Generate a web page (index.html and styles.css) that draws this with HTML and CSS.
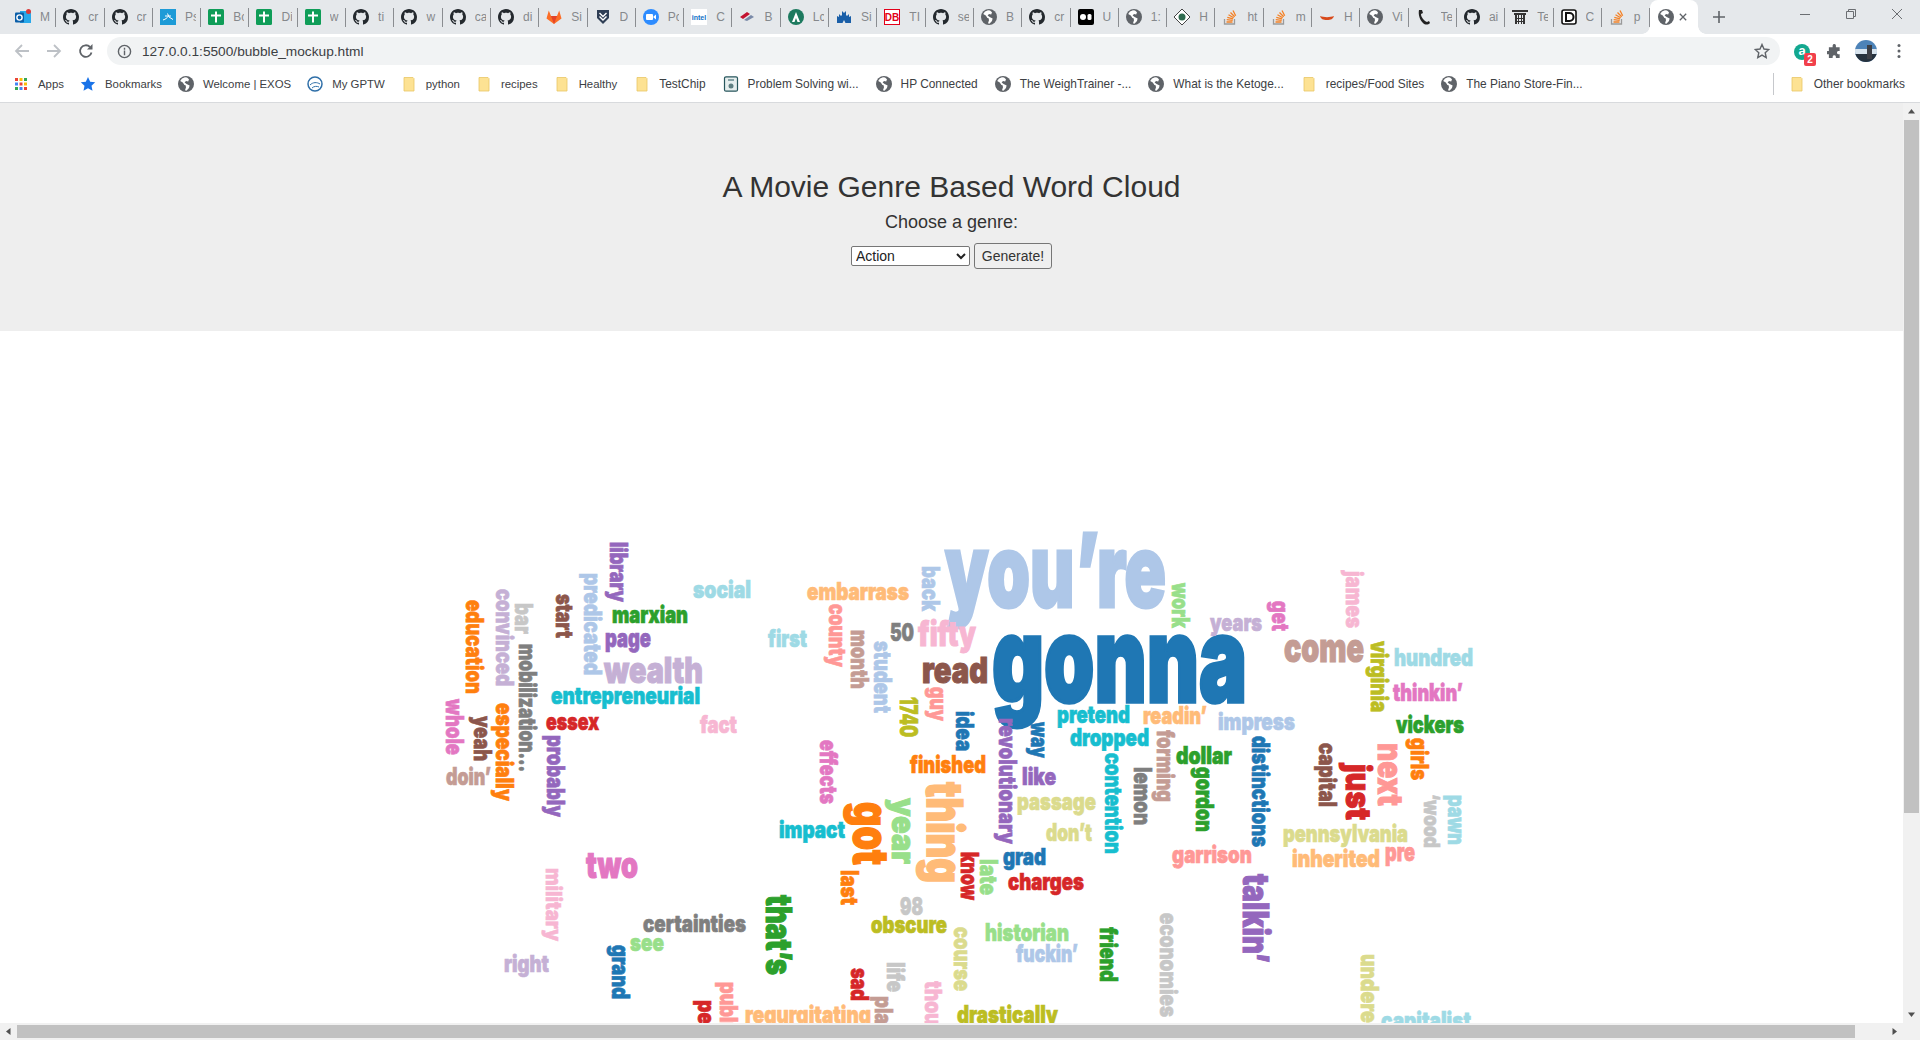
FILE: index.html
```html
<!DOCTYPE html>
<html lang="en">
<head>
<meta charset="utf-8">
<title>bubble_mockup</title>
<link rel="stylesheet" href="styles.css">
</head>
<body>
<svg class="defs" width="0" height="0" aria-hidden="true">
  <symbol id="gh" viewBox="0 0 16 16"><path fill="#24292e" d="M8 0C3.58 0 0 3.58 0 8c0 3.54 2.29 6.53 5.47 7.59.4.07.55-.17.55-.38 0-.19-.01-.82-.01-1.49-2.01.37-2.53-.49-2.69-.94-.09-.23-.48-.94-.82-1.13-.28-.15-.68-.52-.01-.53.63-.01 1.08.58 1.23.82.72 1.21 1.87.87 2.33.66.07-.52.28-.87.51-1.07-1.78-.2-3.64-.89-3.64-3.95 0-.87.31-1.59.82-2.15-.08-.2-.36-1.02.08-2.12 0 0 .67-.21 2.2.82.64-.18 1.32-.27 2-.27.68 0 1.36.09 2 .27 1.53-1.04 2.2-.82 2.2-.82.44 1.1.16 1.92.08 2.12.51.56.82 1.27.82 2.15 0 3.07-1.87 3.75-3.65 3.95.29.25.54.73.54 1.48 0 1.07-.01 1.93-.01 2.2 0 .21.15.46.55.38A8.013 8.013 0 0016 8c0-4.42-3.58-8-8-8z"/></symbol>
  <symbol id="globe" viewBox="0 0 16 16"><circle cx="8" cy="8" r="8" fill="#5f6368"/><path fill="#fff" d="M7 1.2 4 2.4 2.2 5l2.6 1.5L6.4 9l1.2.2.4 2-1 3 1.4.6L11 12l.6-2.6L8.6 8 6.6 6.6 8 5l2.2.4L11 3.2 9 1.4z"/></symbol>
  <symbol id="outlook" viewBox="0 0 16 16"><rect x="5" y="2" width="11" height="12" fill="#28a8ea"/><rect x="0" y="3.5" width="9" height="10" rx="1" fill="#0a5ea8"/><circle cx="4.5" cy="8.5" r="2.6" fill="none" stroke="#fff" stroke-width="1.4"/><circle cx="13.5" cy="2.5" r="2.5" fill="#d83b3b"/></symbol>
  <symbol id="xblue" viewBox="0 0 16 16"><rect width="16" height="16" fill="#1d9bd7"/><path d="M3 11c3-1 4-2 5-3.500M7.500 4.500 9 8l4 2.500M5 7h6" fill="none" stroke="#fff" stroke-width="1"/></symbol>
  <symbol id="cross" viewBox="0 0 16 16"><rect width="16" height="16" rx="1.500" fill="#0f9d58"/><path d="M7 2.500h2v3h4v2H9v6H7v-6H3v-2h4z" fill="#fff"/></symbol>
  <symbol id="gitlab" viewBox="0 0 16 16"><path d="M8 15 .5 9.500 2.800 1.500 5 7h6l2.200-5.500 2.300 8z" fill="#fc6d26"/><path d="M8 15 5 7h6z" fill="#e24329"/></symbol>
  <symbol id="shield" viewBox="0 0 16 16"><path d="M2 1h12v8l-6 6-6-6z" fill="#2f3e55"/><path d="M4.500 4 8 7.500 11.500 4M4.500 7.500 8 11l3.500-3.500" fill="none" stroke="#fff" stroke-width="1.400"/></symbol>
  <symbol id="zoomi" viewBox="0 0 16 16"><circle cx="8" cy="8" r="8" fill="#2d8cff"/><rect x="3" y="5" width="7" height="6" rx="1" fill="#fff"/><path d="M10.500 7.500 13 5.500v5l-2.500-2z" fill="#fff"/></symbol>
  <symbol id="intel" viewBox="0 0 16 16"><rect width="16" height="16" fill="#fff"/><text x="8" y="10.500" class="icon-txt" font-size="7" text-anchor="middle" fill="#0f6fc6">intel</text></symbol>
  <symbol id="bofa" viewBox="0 0 16 16"><path d="M1 8 8 3l3 2-7 5z" fill="#c41230"/><path d="M5 11l7-5 3 2-7 4z" fill="#7a8aa8"/></symbol>
  <symbol id="lc" viewBox="0 0 16 16"><circle cx="8" cy="8" r="8" fill="#1d7a5f"/><path d="M8 3 12 13H9.500L8 9 6.500 13H4z" fill="#fff"/></symbol>
  <symbol id="hp" viewBox="0 0 16 16"><path d="M1 14V7l2 1V5l2 2 1-1V2l2 2 2-2v4l1 1 2-2v3l2-1v7H9.500l-1.500-3-1.500 3z" fill="#1a5fa8"/></symbol>
  <symbol id="db" viewBox="0 0 16 16"><rect x=".5" y=".5" width="15" height="15" fill="#fff" stroke="#e2001a"/><text x="8" y="12" class="icon-txt" font-size="10" text-anchor="middle" fill="#e2001a">DB</text></symbol>
  <symbol id="black" viewBox="0 0 16 16"><rect width="16" height="16" rx="2" fill="#000"/><circle cx="5" cy="8" r="3" fill="#fff"/><rect x="9.500" y="5" width="4" height="6" rx="1.500" fill="#fff"/></symbol>
  <symbol id="diamond" viewBox="0 0 16 16"><path d="M8 0 16 8 8 16 0 8z" fill="#fff" stroke="#444"/><circle cx="8" cy="8" r="3.500" fill="#2f6b4f"/></symbol>
  <symbol id="so" viewBox="0 0 16 16"><path d="M2.500 10v5h10v-5" fill="none" stroke="#9a9a9a" stroke-width="1.300"/><path d="M4.500 13h6M4.700 10.700l6 .6M5.300 8.300l5.800 1.600M6.500 5.800l5.200 3M8.500 3.500l4.200 4.300M11 1.500l2.700 5.300" fill="none" stroke="#f48024" stroke-width="1.300"/></symbol>
  <symbol id="redb" viewBox="0 0 16 16"><path d="M1 7c4 1.500 10 1.500 14 0-1 3-3 4-7 4S2 10 1 7z" fill="#d84a1b"/></symbol>
  <symbol id="phone" viewBox="0 0 16 16"><path d="M3 1h3l1 3-2 1c0 3 3 7 6 8l2-1 1 2c-2 2-5 2-7 0C4 11 2 6 3 1z" fill="#222"/></symbol>
  <symbol id="torii" viewBox="0 0 16 16"><path d="M0 1h16v2H0zM2 4h12v2H2zM3 6h2v9H3zM11 6h2v9h-2zM6 6h1v9H6zM9 6h1v9H9zM3 9h10v1H3zM3 12h10v1H3z" fill="#333"/></symbol>
  <symbol id="dlogo" viewBox="0 0 16 16"><rect x="1" y="1" width="14" height="14" rx="2" fill="#fff" stroke="#111" stroke-width="1.600"/><path d="M5 4h3.500a4 4 0 010 8H5z" fill="none" stroke="#111" stroke-width="2"/></symbol>
  <symbol id="folder" viewBox="0 0 16 16"><path d="M3 1.500h9l1 1v12.500H3z" fill="#fde293" stroke="#e8c766" stroke-width=".8"/></symbol>
  <symbol id="gptw" viewBox="0 0 16 16"><circle cx="8" cy="8" r="7" fill="#fff" stroke="#2f6fa8" stroke-width="1.500"/><path d="M3 9c3-3 7-3 10-1M5 12c2-2 5-2 7-1" fill="none" stroke="#2f6fa8"/></symbol>
  <symbol id="doc" viewBox="0 0 16 16"><rect x="1.500" y=".8" width="13" height="14.400" rx="1.500" fill="#e6eeee" stroke="#27565c" stroke-width="1.200"/><circle cx="8" cy="10" r="2.500" fill="#5f7f82"/><path d="M5 4h6" stroke="#27565c"/></symbol>
</svg>

<div class="tabstrip">
  <div class="tab"><svg class="fav"><use href="#outlook"/></svg><span class="tab-t">M</span></div>
  <div class="tab"><svg class="fav"><use href="#gh"/></svg><span class="tab-t">cr</span></div>
  <div class="tab"><svg class="fav"><use href="#gh"/></svg><span class="tab-t">cr</span></div>
  <div class="tab"><svg class="fav"><use href="#xblue"/></svg><span class="tab-t">Ps</span></div>
  <div class="tab"><svg class="fav"><use href="#cross"/></svg><span class="tab-t">Bc</span></div>
  <div class="tab"><svg class="fav"><use href="#cross"/></svg><span class="tab-t">Di</span></div>
  <div class="tab"><svg class="fav"><use href="#cross"/></svg><span class="tab-t">w</span></div>
  <div class="tab"><svg class="fav"><use href="#gh"/></svg><span class="tab-t">ti</span></div>
  <div class="tab"><svg class="fav"><use href="#gh"/></svg><span class="tab-t">w</span></div>
  <div class="tab"><svg class="fav"><use href="#gh"/></svg><span class="tab-t">ca</span></div>
  <div class="tab"><svg class="fav"><use href="#gh"/></svg><span class="tab-t">di</span></div>
  <div class="tab"><svg class="fav"><use href="#gitlab"/></svg><span class="tab-t">Si</span></div>
  <div class="tab"><svg class="fav"><use href="#shield"/></svg><span class="tab-t">D</span></div>
  <div class="tab"><svg class="fav"><use href="#zoomi"/></svg><span class="tab-t">Pc</span></div>
  <div class="tab"><svg class="fav"><use href="#intel"/></svg><span class="tab-t">C</span></div>
  <div class="tab"><svg class="fav"><use href="#bofa"/></svg><span class="tab-t">B</span></div>
  <div class="tab"><svg class="fav"><use href="#lc"/></svg><span class="tab-t">Lc</span></div>
  <div class="tab"><svg class="fav"><use href="#hp"/></svg><span class="tab-t">Si</span></div>
  <div class="tab"><svg class="fav"><use href="#db"/></svg><span class="tab-t">TI</span></div>
  <div class="tab"><svg class="fav"><use href="#gh"/></svg><span class="tab-t">se</span></div>
  <div class="tab"><svg class="fav"><use href="#globe"/></svg><span class="tab-t">B</span></div>
  <div class="tab"><svg class="fav"><use href="#gh"/></svg><span class="tab-t">cr</span></div>
  <div class="tab"><svg class="fav"><use href="#black"/></svg><span class="tab-t">U</span></div>
  <div class="tab"><svg class="fav"><use href="#globe"/></svg><span class="tab-t">1:</span></div>
  <div class="tab"><svg class="fav"><use href="#diamond"/></svg><span class="tab-t">H</span></div>
  <div class="tab"><svg class="fav"><use href="#so"/></svg><span class="tab-t">ht</span></div>
  <div class="tab"><svg class="fav"><use href="#so"/></svg><span class="tab-t">m</span></div>
  <div class="tab"><svg class="fav"><use href="#redb"/></svg><span class="tab-t">H</span></div>
  <div class="tab"><svg class="fav"><use href="#globe"/></svg><span class="tab-t">Vi</span></div>
  <div class="tab"><svg class="fav"><use href="#phone"/></svg><span class="tab-t">Te</span></div>
  <div class="tab"><svg class="fav"><use href="#gh"/></svg><span class="tab-t">ai</span></div>
  <div class="tab"><svg class="fav"><use href="#torii"/></svg><span class="tab-t">Te</span></div>
  <div class="tab"><svg class="fav"><use href="#dlogo"/></svg><span class="tab-t">C</span></div>
  <div class="tab"><svg class="fav"><use href="#so"/></svg><span class="tab-t">p</span></div>
  <div class="tab tab-active"><svg class="fav"><use href="#globe"/></svg><svg class="tab-x" viewBox="0 0 10 10"><path d="M1 1l8 8M9 1 1 9"/></svg></div>
  <svg class="newtab" viewBox="0 0 12 12"><path d="M6 0v12M0 6h12"/></svg>
  <div class="winctl">
    <svg class="win-b" viewBox="0 0 10 10"><path d="M0 5.500h10"/></svg>
    <svg class="win-b" viewBox="0 0 10 10"><path d="M.5 2.500h7v7h-7zM2.500 2.500v-2h7v7h-2"/></svg>
    <svg class="win-b" viewBox="0 0 10 10"><path d="M0 0l10 10M10 0 0 10"/></svg>
  </div>
</div>

<div class="toolbar">
  <svg class="nav nav-off" viewBox="0 0 16 16"><path d="M15 8H2M8 2 2 8l6 6"/></svg>
  <svg class="nav nav-off" viewBox="0 0 16 16"><path d="M1 8h13M8 2l6 6-6 6"/></svg>
  <svg class="nav" viewBox="0 0 16 16"><path d="M13.500 9.500A5.800 5.800 0 1 1 12 4"/><path class="solid" d="M14.500 1v5.500H9z"/></svg>
  <div class="omnibox">
    <svg class="info" viewBox="0 0 16 16"><circle cx="8" cy="8" r="6.500"/><path d="M8 7v5M8 4v2"/></svg>
    <span class="url">127.0.0.1:5500/bubble_mockup.html</span>
    <svg class="star" viewBox="0 0 16 16"><path d="M8 1.500l2 4.500 4.800.5-3.600 3.200 1 4.800L8 12.100 3.800 14.500l1-4.800L1.200 6.500 6 6z"/></svg>
  </div>
  <div class="ext">
    <div class="ext-a"><span class="ext-l">a</span><span class="ext-n">2</span></div>
    <svg class="ext-p" viewBox="0 0 16 16"><path d="M6 1.500a1.800 1.800 0 013.500 0V3.500h4v4h-1.500a1.800 1.800 0 000 3.500h1.500v4h-4v-1.500a1.800 1.800 0 00-3.500 0v1.500H2v-4H.5a1.800 1.800 0 010-3.500H2v-4h4z"/></svg>
    <svg class="avatar" viewBox="0 0 22 22"><defs><clipPath id="av"><circle cx="11" cy="11" r="11"/></clipPath></defs><g clip-path="url(#av)"><rect width="22" height="22" fill="#4d83b8"/><rect y="9" width="22" height="5" fill="#d8e4ee"/><rect y="14" width="22" height="8" fill="#26323e"/><rect x="12" y="5" width="5" height="14" fill="#3c3f46"/></g></svg>
    <svg class="dots" viewBox="0 0 4 16"><circle cx="2" cy="2.500" r="1.500"/><circle cx="2" cy="8" r="1.500"/><circle cx="2" cy="13.500" r="1.500"/></svg>
  </div>
</div>

<div class="bookmarks">
  <div class="bm"><svg class="bm-i" viewBox="0 0 16 16"><path fill="#ea4335" d="M2 2h3v3H2z"/><path fill="#fbbc05" d="M6.500 2h3v3h-3z"/><path fill="#34a853" d="M11 2h3v3h-3z"/><path fill="#4285f4" d="M2 6.500h3v3H2z"/><path fill="#ea4335" d="M6.500 6.500h3v3h-3z"/><path fill="#fbbc05" d="M11 6.500h3v3h-3z"/><path fill="#34a853" d="M2 11h3v3H2z"/><path fill="#4285f4" d="M6.500 11h3v3h-3z"/><path fill="#ea4335" d="M11 11h3v3h-3z"/></svg><span>Apps</span></div>
  <div class="bm"><svg class="bm-i" viewBox="0 0 16 16"><path fill="#1a73e8" d="M8 1l2.200 4.700 5 .6-3.700 3.400 1 5L8 12.200 3.500 14.700l1-5L.8 6.300l5-.6z"/></svg><span>Bookmarks</span></div>
  <div class="bm"><svg class="bm-i"><use href="#globe"/></svg><span>Welcome | EXOS</span></div>
  <div class="bm"><svg class="bm-i"><use href="#gptw"/></svg><span>My GPTW</span></div>
  <div class="bm"><svg class="bm-i"><use href="#folder"/></svg><span>python</span></div>
  <div class="bm"><svg class="bm-i"><use href="#folder"/></svg><span>recipes</span></div>
  <div class="bm"><svg class="bm-i"><use href="#folder"/></svg><span>Healthy</span></div>
  <div class="bm bm-lg"><svg class="bm-i"><use href="#folder"/></svg><span>TestChip</span></div>
  <div class="bm bm-lg"><svg class="bm-i"><use href="#doc"/></svg><span>Problem Solving wi...</span></div>
  <div class="bm bm-lg"><svg class="bm-i"><use href="#globe"/></svg><span>HP Connected</span></div>
  <div class="bm bm-lg"><svg class="bm-i"><use href="#globe"/></svg><span>The WeighTrainer -...</span></div>
  <div class="bm bm-lg"><svg class="bm-i"><use href="#globe"/></svg><span>What is the Ketoge...</span></div>
  <div class="bm bm-lg"><svg class="bm-i"><use href="#folder"/></svg><span>recipes/Food Sites</span></div>
  <div class="bm bm-lg"><svg class="bm-i"><use href="#globe"/></svg><span>The Piano Store-Fin...</span></div>
  <div class="bm bm-lg bm-other"><svg class="bm-i"><use href="#folder"/></svg><span>Other bookmarks</span></div>
</div>

<div class="viewport">
  <main class="page">
    <header class="hero">
      <h1 class="title">A Movie Genre Based Word Cloud</h1>
      <label class="choose" for="genre">Choose a genre:</label>
      <form class="genre-form">
        <select id="genre" class="genre"><option>Action</option></select>
        <button type="button" class="go">Generate!</button>
      </form>
    </header>
    <svg class="cloud" viewBox="0 332 1903 692" width="1903" height="692">
      <text class="c1" transform="translate(945 608)" font-size="102" textLength="221" lengthAdjust="spacingAndGlyphs">you’re</text>
      <text class="c0" transform="translate(992 703)" font-size="119" textLength="255" lengthAdjust="spacingAndGlyphs">gonna</text>
      <text class="c8" transform="translate(610 543) rotate(90)" font-size="24" textLength="60" lengthAdjust="spacingAndGlyphs">library</text>
      <text class="c1" transform="translate(584 574) rotate(90)" font-size="24" textLength="102" lengthAdjust="spacingAndGlyphs">predicated</text>
      <text class="c10" transform="translate(556 595) rotate(90)" font-size="24" textLength="44" lengthAdjust="spacingAndGlyphs">start</text>
      <text class="c15" transform="translate(515 604) rotate(90)" font-size="24" textLength="31" lengthAdjust="spacingAndGlyphs">bar</text>
      <text class="c9" transform="translate(496 590) rotate(90)" font-size="24" textLength="97" lengthAdjust="spacingAndGlyphs">convinced</text>
      <text class="c2" transform="translate(466 601) rotate(90)" font-size="24" textLength="94" lengthAdjust="spacingAndGlyphs">education</text>
      <text class="c14" transform="translate(519 645) rotate(90)" font-size="24" textLength="128" lengthAdjust="spacingAndGlyphs">mobilization...</text>
      <text class="c12" transform="translate(446 700) rotate(90)" font-size="24" textLength="56" lengthAdjust="spacingAndGlyphs">whole</text>
      <text class="c10" transform="translate(474 717) rotate(90)" font-size="24" textLength="45" lengthAdjust="spacingAndGlyphs">yeah</text>
      <text class="c2" transform="translate(496 704) rotate(90)" font-size="24" textLength="98" lengthAdjust="spacingAndGlyphs">especially</text>
      <text class="c8" transform="translate(547 736) rotate(90)" font-size="24" textLength="82" lengthAdjust="spacingAndGlyphs">probably</text>
      <text class="c11" transform="translate(446 786)" font-size="24" textLength="45" lengthAdjust="spacingAndGlyphs">doin’</text>
      <text class="c6" transform="translate(546 731)" font-size="24" textLength="53" lengthAdjust="spacingAndGlyphs">essex</text>
      <text class="c18" transform="translate(551 705)" font-size="23" textLength="149" lengthAdjust="spacingAndGlyphs">entrepreneurial</text>
      <text class="c9" transform="translate(604 684)" font-size="36" textLength="99" lengthAdjust="spacingAndGlyphs">wealth</text>
      <text class="c8" transform="translate(605 648)" font-size="25" textLength="46" lengthAdjust="spacingAndGlyphs">page</text>
      <text class="c4" transform="translate(612 624)" font-size="24" textLength="76" lengthAdjust="spacingAndGlyphs">marxian</text>
      <text class="c19" transform="translate(693 599)" font-size="24" textLength="58" lengthAdjust="spacingAndGlyphs">social</text>
      <text class="c13" transform="translate(700 734)" font-size="24" textLength="37" lengthAdjust="spacingAndGlyphs">fact</text>
      <text class="c19" transform="translate(768 648)" font-size="24" textLength="39" lengthAdjust="spacingAndGlyphs">first</text>
      <text class="c3" transform="translate(807 601)" font-size="24" textLength="102" lengthAdjust="spacingAndGlyphs">embarrass</text>
      <text class="c7" transform="translate(829 605) rotate(90)" font-size="23" textLength="63" lengthAdjust="spacingAndGlyphs">county</text>
      <text class="c11" transform="translate(851 631) rotate(90)" font-size="24" textLength="59" lengthAdjust="spacingAndGlyphs">month</text>
      <text class="c1" transform="translate(874 642) rotate(90)" font-size="24" textLength="72" lengthAdjust="spacingAndGlyphs">student</text>
      <text class="c14" transform="translate(890 642)" font-size="24" textLength="24" lengthAdjust="spacingAndGlyphs">50</text>
      <text class="c16" transform="translate(900 698) rotate(90)" font-size="24" textLength="40" lengthAdjust="spacingAndGlyphs">1740</text>
      <text class="c12" transform="translate(820 741) rotate(90)" font-size="24" textLength="64" lengthAdjust="spacingAndGlyphs">effects</text>
      <text class="c1" transform="translate(922 567) rotate(90)" font-size="24" textLength="45" lengthAdjust="spacingAndGlyphs">back</text>
      <text class="c5" transform="translate(1172 584) rotate(90)" font-size="24" textLength="45" lengthAdjust="spacingAndGlyphs">work</text>
      <text class="c13" transform="translate(918 647)" font-size="34" textLength="58" lengthAdjust="spacingAndGlyphs">fifty</text>
      <text class="c9" transform="translate(1210 632)" font-size="24" textLength="52" lengthAdjust="spacingAndGlyphs">years</text>
      <text class="c12" transform="translate(1272 602) rotate(90)" font-size="23" textLength="30" lengthAdjust="spacingAndGlyphs">get</text>
      <text class="c13" transform="translate(1346 572) rotate(90)" font-size="23" textLength="57" lengthAdjust="spacingAndGlyphs">james</text>
      <text class="c11" transform="translate(1284 663)" font-size="40" textLength="80" lengthAdjust="spacingAndGlyphs">come</text>
      <text class="c16" transform="translate(1371 642) rotate(90)" font-size="24" textLength="71" lengthAdjust="spacingAndGlyphs">virginia</text>
      <text class="c19" transform="translate(1394 667)" font-size="24" textLength="79" lengthAdjust="spacingAndGlyphs">hundred</text>
      <text class="c12" transform="translate(1393 702)" font-size="24" textLength="70" lengthAdjust="spacingAndGlyphs">thinkin’</text>
      <text class="c10" transform="translate(922 684)" font-size="36" textLength="66" lengthAdjust="spacingAndGlyphs">read</text>
      <text class="c7" transform="translate(930 688) rotate(90)" font-size="23" textLength="34" lengthAdjust="spacingAndGlyphs">guy</text>
      <text class="c0" transform="translate(956 712) rotate(90)" font-size="24" textLength="40" lengthAdjust="spacingAndGlyphs">idea</text>
      <text class="c18" transform="translate(1057 724)" font-size="24" textLength="73" lengthAdjust="spacingAndGlyphs">pretend</text>
      <text class="c3" transform="translate(1143 725)" font-size="24" textLength="64" lengthAdjust="spacingAndGlyphs">readin’</text>
      <text class="c1" transform="translate(1218 731)" font-size="23" textLength="77" lengthAdjust="spacingAndGlyphs">impress</text>
      <text class="c4" transform="translate(1396 734)" font-size="24" textLength="68" lengthAdjust="spacingAndGlyphs">vickers</text>
      <text class="c8" transform="translate(999 719) rotate(90)" font-size="24" textLength="126" lengthAdjust="spacingAndGlyphs">revolutionary</text>
      <text class="c0" transform="translate(1031 723) rotate(90)" font-size="24" textLength="36" lengthAdjust="spacingAndGlyphs">way</text>
      <text class="c18" transform="translate(1070 747)" font-size="24" textLength="79" lengthAdjust="spacingAndGlyphs">dropped</text>
      <text class="c11" transform="translate(1157 731) rotate(90)" font-size="24" textLength="72" lengthAdjust="spacingAndGlyphs">forming</text>
      <text class="c4" transform="translate(1176 765)" font-size="24" textLength="56" lengthAdjust="spacingAndGlyphs">dollar</text>
      <text class="c4" transform="translate(1196 768) rotate(90)" font-size="24" textLength="65" lengthAdjust="spacingAndGlyphs">gordon</text>
      <text class="c0" transform="translate(1252 737) rotate(90)" font-size="24" textLength="111" lengthAdjust="spacingAndGlyphs">distinctions</text>
      <text class="c10" transform="translate(1319 744) rotate(90)" font-size="24" textLength="64" lengthAdjust="spacingAndGlyphs">capital</text>
      <text class="c6" transform="translate(1346 765) rotate(90)" font-size="34" textLength="56" lengthAdjust="spacingAndGlyphs">just</text>
      <text class="c7" transform="translate(1378 744) rotate(90)" font-size="34" textLength="63" lengthAdjust="spacingAndGlyphs">next</text>
      <text class="c2" transform="translate(1411 739) rotate(90)" font-size="24" textLength="42" lengthAdjust="spacingAndGlyphs">girls</text>
      <text class="c2" transform="translate(910 774)" font-size="24" textLength="76" lengthAdjust="spacingAndGlyphs">finished</text>
      <text class="c8" transform="translate(1022 786)" font-size="24" textLength="34" lengthAdjust="spacingAndGlyphs">like</text>
      <text class="c18" transform="translate(1105 754) rotate(90)" font-size="23" textLength="101" lengthAdjust="spacingAndGlyphs">contention</text>
      <text class="c14" transform="translate(1134 768) rotate(90)" font-size="24" textLength="58" lengthAdjust="spacingAndGlyphs">lemon</text>
      <text class="c17" transform="translate(1017 811)" font-size="24" textLength="79" lengthAdjust="spacingAndGlyphs">passage</text>
      <text class="c17" transform="translate(1046 842)" font-size="24" textLength="46" lengthAdjust="spacingAndGlyphs">don’t</text>
      <text class="c17" transform="translate(1283 843)" font-size="24" textLength="125" lengthAdjust="spacingAndGlyphs">pennsylvania</text>
      <text class="c15" transform="translate(1424 795) rotate(90)" font-size="22" textLength="54" lengthAdjust="spacingAndGlyphs">‘wood</text>
      <text class="c19" transform="translate(1448 796) rotate(90)" font-size="24" textLength="50" lengthAdjust="spacingAndGlyphs">pawn</text>
      <text class="c7" transform="translate(1172 864)" font-size="24" textLength="80" lengthAdjust="spacingAndGlyphs">garrison</text>
      <text class="c3" transform="translate(1292 868)" font-size="24" textLength="88" lengthAdjust="spacingAndGlyphs">inherited</text>
      <text class="c7" transform="translate(1385 862)" font-size="25" textLength="30" lengthAdjust="spacingAndGlyphs">pre</text>
      <text class="c0" transform="translate(1003 866)" font-size="23" textLength="43" lengthAdjust="spacingAndGlyphs">grad</text>
      <text class="c6" transform="translate(1008 891)" font-size="23" textLength="76" lengthAdjust="spacingAndGlyphs">charges</text>
      <text class="c8" transform="translate(1243 875) rotate(90)" font-size="36" textLength="89" lengthAdjust="spacingAndGlyphs">talkin’</text>
      <text class="c5" transform="translate(985 942)" font-size="24" textLength="84" lengthAdjust="spacingAndGlyphs">historian</text>
      <text class="c1" transform="translate(1016 963)" font-size="24" textLength="62" lengthAdjust="spacingAndGlyphs">fuckin’</text>
      <text class="c4" transform="translate(1100 928) rotate(90)" font-size="24" textLength="55" lengthAdjust="spacingAndGlyphs">friend</text>
      <text class="c15" transform="translate(1160 914) rotate(90)" font-size="23" textLength="104" lengthAdjust="spacingAndGlyphs">economies</text>
      <text class="c17" transform="translate(1361 955) rotate(90)" font-size="24" textLength="155" lengthAdjust="spacingAndGlyphs">underestimated</text>
      <text class="c19" transform="translate(1381 1030)" font-size="24" textLength="90" lengthAdjust="spacingAndGlyphs">capitalist</text>
      <text class="c16" transform="translate(957 1024)" font-size="24" textLength="101" lengthAdjust="spacingAndGlyphs">drastically</text>
      <text class="c3" transform="translate(745 1024)" font-size="24" textLength="126" lengthAdjust="spacingAndGlyphs">regurgitating</text>
      <text class="c13" transform="translate(925 982) rotate(90)" font-size="23" textLength="77" lengthAdjust="spacingAndGlyphs">thought</text>
      <text class="c11" transform="translate(875 997) rotate(90)" font-size="24" textLength="85" lengthAdjust="spacingAndGlyphs">plausible</text>
      <text class="c15" transform="translate(887 963) rotate(90)" font-size="24" textLength="30" lengthAdjust="spacingAndGlyphs">life</text>
      <text class="c6" transform="translate(851 969) rotate(90)" font-size="24" textLength="33" lengthAdjust="spacingAndGlyphs">sad</text>
      <text class="c7" transform="translate(720 983) rotate(90)" font-size="24" textLength="68" lengthAdjust="spacingAndGlyphs">publish</text>
      <text class="c6" transform="translate(698 1001) rotate(90)" font-size="24" textLength="66" lengthAdjust="spacingAndGlyphs">people</text>
      <text class="c0" transform="translate(612 946) rotate(90)" font-size="24" textLength="54" lengthAdjust="spacingAndGlyphs">grand</text>
      <text class="c5" transform="translate(630 952)" font-size="24" textLength="34" lengthAdjust="spacingAndGlyphs">see</text>
      <text class="c14" transform="translate(643 933)" font-size="23" textLength="103" lengthAdjust="spacingAndGlyphs">certainties</text>
      <text class="c9" transform="translate(504 973)" font-size="23" textLength="45" lengthAdjust="spacingAndGlyphs">right</text>
      <text class="c13" transform="translate(546 869) rotate(90)" font-size="22" textLength="73" lengthAdjust="spacingAndGlyphs">military</text>
      <text class="c12" transform="translate(586 879)" font-size="36" textLength="52" lengthAdjust="spacingAndGlyphs">two</text>
      <text class="c4" transform="translate(766 896) rotate(90)" font-size="36" textLength="80" lengthAdjust="spacingAndGlyphs">that’s</text>
      <text class="c15" transform="translate(900 916)" font-size="24" textLength="23" lengthAdjust="spacingAndGlyphs">98</text>
      <text class="c16" transform="translate(871 934)" font-size="23" textLength="76" lengthAdjust="spacingAndGlyphs">obscure</text>
      <text class="c17" transform="translate(954 928) rotate(90)" font-size="24" textLength="64" lengthAdjust="spacingAndGlyphs">course</text>
      <text class="c18" transform="translate(779 839)" font-size="23" textLength="66" lengthAdjust="spacingAndGlyphs">impact</text>
      <text class="c2" transform="translate(854 803) rotate(90)" font-size="48" textLength="63" lengthAdjust="spacingAndGlyphs">got</text>
      <text class="c5" transform="translate(892 799) rotate(90)" font-size="33" textLength="66" lengthAdjust="spacingAndGlyphs">year</text>
      <text class="c3" transform="translate(927 783) rotate(90)" font-size="50" textLength="101" lengthAdjust="spacingAndGlyphs">thing</text>
      <text class="c2" transform="translate(841 871) rotate(90)" font-size="24" textLength="35" lengthAdjust="spacingAndGlyphs">last</text>
      <text class="c6" transform="translate(961 853) rotate(90)" font-size="24" textLength="48" lengthAdjust="spacingAndGlyphs">know</text>
      <text class="c5" transform="translate(980 860) rotate(90)" font-size="24" textLength="36" lengthAdjust="spacingAndGlyphs">late</text>
    </svg>
  </main>
  <div class="vbar">
    <svg class="arrow" viewBox="0 0 17 17"><path d="M8.500 6 12 10.500H5z"/></svg>
    <div class="vthumb"></div>
    <svg class="arrow arrow-end" viewBox="0 0 17 17"><path d="M8.500 11 12 6.500H5z"/></svg>
  </div>
  <div class="hbar">
    <svg class="arrow" viewBox="0 0 17 17"><path d="M6 8.500 10.500 5v7z"/></svg>
    <div class="hthumb"></div>
    <svg class="arrow arrow-end" viewBox="0 0 17 17"><path d="M11 8.500 6.500 5v7z"/></svg>
  </div>
  <div class="corner"></div>
</div>
</body>
</html>
```

FILE: styles.css
```css
* { box-sizing: border-box; }
html, body { margin: 0; height: 100%; }
body {
  width: 1920px;
  height: 1040px;
  overflow: hidden;
  display: flex;
  flex-direction: column;
  font-family: "Liberation Sans", Arial, sans-serif;
  background: #fff;
}
.defs { position: absolute; }
.icon-txt { font-family: "Liberation Sans", sans-serif; font-weight: 700; }

/* tab strip */
.tabstrip {
  height: 34px;
  flex: none;
  display: flex;
  align-items: center;
  padding-left: 8px;
  background: #e5e8eb;
}
.tab {
  width: 48.3px;
  height: 34px;
  flex: none;
  display: flex;
  align-items: center;
  gap: 9px;
  padding-left: 7px;
  overflow: hidden;
  position: relative;
}
.tab::after {
  content: "";
  position: absolute;
  right: 0;
  top: 8px;
  bottom: 7px;
  width: 1px;
  background: #8a8d91;
}
.fav { width: 16px; height: 16px; flex: none; }
.tab-t {
  width: 11px;
  overflow: hidden;
  white-space: nowrap;
  font-size: 12px;
  color: #85888c;
}
.tab-active {
  background: #fff;
  border-radius: 8px 8px 0 0;
  gap: 5px;
  padding-left: 8px;
  overflow: visible;
}
.tab-active::before,
.tab-active::after {
  content: "";
  position: absolute;
  top: auto;
  bottom: 0;
  width: 8px;
  height: 8px;
}
.tab-active::before { left: -8px; background: radial-gradient(circle at 0 0, transparent 7.500px, #fff 8px); }
.tab-active::after { right: -8px; background: radial-gradient(circle at 100% 0, transparent 7.500px, #fff 8px); }
.tab-x { width: 8px; height: 8px; fill: none; stroke: #5f6368; stroke-width: 1.6; }
.newtab { width: 12px; height: 12px; margin-left: 15px; fill: none; stroke: #5f6368; stroke-width: 1.6; flex: none; }
.winctl { margin-left: auto; display: flex; align-self: flex-start; gap: 36px; padding: 9px 18px 0 0; }
.win-b { width: 10px; height: 10px; fill: none; stroke: #6b6e72; stroke-width: 1; }

/* toolbar */
.toolbar {
  height: 34px;
  flex: none;
  display: flex;
  align-items: center;
  background: #fff;
  padding-left: 14px;
  gap: 16px;
}
.nav { width: 16px; height: 16px; flex: none; fill: none; stroke: #5f6368; stroke-width: 1.8; }
.nav-off { stroke: #bdc1c6; }
.nav .solid { fill: #5f6368; stroke: none; }
.omnibox {
  width: 1673px;
  height: 28px;
  margin-left: -3px;
  flex: none;
  display: flex;
  align-items: center;
  background: #f1f3f4;
  border-radius: 14px;
  padding: 0 10px 0 10px;
}
.info { width: 15px; height: 15px; fill: none; stroke: #5f6368; stroke-width: 1.5; flex: none; }
.url { margin-left: 10px; font-size: 13.700px; color: #3c4043; white-space: nowrap; }
.star { width: 16px; height: 16px; margin-left: auto; fill: none; stroke: #5f6368; stroke-width: 1.4; }
.ext { display: flex; align-items: center; gap: 13px; margin-left: -2px; }
.ext-a { width: 20px; height: 24px; position: relative; flex: none; }
.ext-l { display: block; width: 16px; height: 16px; margin-top: 5px; border-radius: 50%; background: #13a88f; color: #fff; font-size: 13px; font-weight: 700; line-height: 14px; text-align: center; }
.ext-n { position: absolute; left: 10px; top: 14px; width: 12px; height: 13px; border-radius: 2px; background: #f1404b; color: #fff; font-size: 10px; font-weight: 700; line-height: 13px; text-align: center; }
.ext-p { width: 15px; height: 15px; fill: #5f6368; flex: none; }
.avatar { width: 22px; height: 22px; flex: none; }
.dots { width: 4px; height: 16px; margin-left: 7px; fill: #5f6368; flex: none; }

/* bookmarks bar */
.bookmarks {
  height: 35px;
  flex: none;
  display: flex;
  align-items: center;
  gap: 16px;
  padding: 0 15px 3px 13px;
  background: #fff;
  border-bottom: 1px solid #d8dadd;
}
.bm { display: flex; align-items: center; gap: 9px; font-size: 11.400px; color: #3c4043; white-space: nowrap; }
.bm-lg { font-size: 11.900px; margin-left: 1px; }
.bm-i { width: 16px; height: 16px; flex: none; }
.bm-other { margin-left: auto; padding-left: 16px; position: relative; }
.bm-other::before { content: ""; position: absolute; left: 0; top: -3px; bottom: -3px; width: 1px; background: #c6c8cc; }

/* page */
.viewport {
  flex: 1;
  min-height: 0;
  display: grid;
  grid-template-columns: 1fr 17px;
  grid-template-rows: 1fr 17px;
}
.page { overflow: hidden; min-width: 0; min-height: 0; background: #fff; }
.hero {
  height: 228px;
  display: flex;
  flex-direction: column;
  align-items: center;
  padding-top: 66px;
  background: #eee;
  color: #333;
}
.title { margin: 0; font-size: 30px; font-weight: 400; line-height: 36px; }
.choose { margin-top: 6px; font-size: 18px; line-height: 22px; }
.genre-form { display: flex; align-items: center; gap: 4px; margin-top: 10px; height: 26px; }
.genre { width: 119px; height: 20px; font: 14px "Liberation Sans", sans-serif; background: #fff; color: #222; border: 1px solid #767676; border-radius: 2px; padding: 0; }
.go { width: 78px; height: 26px; font: 14px "Liberation Sans", sans-serif; background: #efefef; color: #333; border: 1px solid #767676; border-radius: 3px; padding: 0; }

.cloud { display: block; }
.cloud text {
  font-family: Inter, "Liberation Sans", sans-serif;
  font-weight: 900;
  fill: currentColor;
  stroke: currentColor;
  stroke-width: .03em;
}
.c0 { color: #1f77b4; } .c1 { color: #aec7e8; } .c2 { color: #ff7f0e; } .c3 { color: #ffbb78; }
.c4 { color: #2ca02c; } .c5 { color: #98df8a; } .c6 { color: #d62728; } .c7 { color: #ff9896; }
.c8 { color: #9467bd; } .c9 { color: #c5b0d5; } .c10 { color: #8c564b; } .c11 { color: #c49c94; }
.c12 { color: #e377c2; } .c13 { color: #f7b6d2; } .c14 { color: #7f7f7f; } .c15 { color: #c7c7c7; }
.c16 { color: #bcbd22; } .c17 { color: #dbdb8d; } .c18 { color: #17becf; } .c19 { color: #9edae5; }

/* scrollbars */
.vbar { background: #f1f1f1; display: flex; flex-direction: column; }
.hbar { background: #f1f1f1; display: flex; align-items: center; }
.arrow { width: 17px; height: 17px; flex: none; fill: #505050; }
.vthumb { width: 15px; height: 693px; margin: 0 1px; background: #c1c1c1; }
.arrow-end { margin-top: auto; }
.hthumb { width: 1838px; height: 13px; background: #c1c1c1; }
.hbar .arrow-end { margin: 0 0 0 auto; }
.corner { background: #f1f1f1; }
```
